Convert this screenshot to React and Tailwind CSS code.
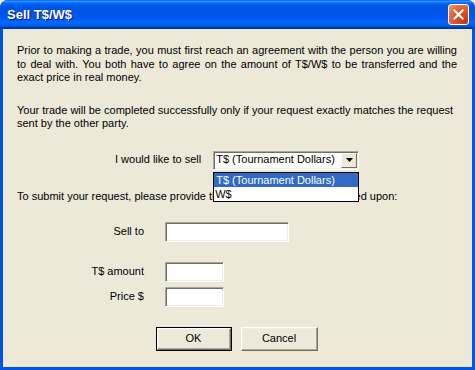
const font = { fontFamily: '"Liberation Sans", Arial, sans-serif' };

function Sunken({ className = '', children }) {
  return (
    <div
      className={`border border-t-[#aca899] border-l-[#aca899] border-r-white border-b-white bg-white shadow-[inset_1px_1px_0_#716f64,inset_-1px_-1px_0_#f1efe2] ${className}`}
    >
      {children}
    </div>
  );
}

function Button({ label, isDefault }) {
  const face = (
    <div className="flex h-full w-full items-center justify-center border border-t-white border-l-white border-r-[#716f64] border-b-[#716f64] bg-[#ece9d8] shadow-[inset_-1px_-1px_0_#aca899,inset_1px_1px_0_#f1efe2]">
      {label}
    </div>
  );
  return isDefault ? (
    <div className="h-[24px] w-[76px] border border-black">{face}</div>
  ) : (
    <div className="h-[24px] w-[77px]">{face}</div>
  );
}

function FieldRow({ label, width, className = '' }) {
  return (
    <div className={`flex items-center ${className}`}>
      <span className="w-[127px] text-right">{label}</span>
      <Sunken className={`ml-[21px] h-[20px] ${width}`} />
    </div>
  );
}

export default function App() {
  return (
    <div className="h-[370px] w-[475px] overflow-hidden bg-[#ece9d8]" style={font}>
      <div className="flex h-full w-full flex-col rounded-t-[8px] bg-[#0054e3]">
        <div className="flex h-[29px] items-center justify-between rounded-t-[8px] bg-[linear-gradient(180deg,#0058ee_0%,#3593ff_4%,#288eff_6%,#127dff_8%,#036ffc_10%,#0262ee_14%,#0057e5_20%,#0054e3_24%,#0055eb_56%,#005bf5_66%,#026afe_76%,#0062ef_86%,#0052d6_92%,#0040ab_94%,#003092_100%)] pl-[7px] pr-[6px]">
          <span className="text-[13px] font-bold text-white [text-shadow:1px_1px_0_#0f1089]">Sell T$/W$</span>
          <div className="flex h-[21px] w-[21px] items-center justify-center rounded-[3px] border border-white bg-[radial-gradient(circle_at_85%_85%,#c23a0c_0%,#e0562a_50%,#e8744a_75%,#f0a080_100%)]">
            <svg width="11" height="11" viewBox="0 0 11 11">
              <path d="M1.5 1.5 L9.5 9.5 M9.5 1.5 L1.5 9.5" stroke="white" strokeWidth="2.2" strokeLinecap="square" />
            </svg>
          </div>
        </div>
        <div className="mx-[3px] mb-[3px] flex-1 bg-[#ece9d8] pl-[14px] pr-[15px] pt-[15px] text-[11px] leading-[13.5px] text-black">
          <p className="text-justify">
            <span className="block [text-align-last:justify]">
              Prior to making a trade, you must first reach an agreement with the person you are willing
            </span>
            <span className="block [text-align-last:justify]">
              to deal with. You both have to agree on the amount of T$/W$ to be transferred and the
            </span>
            <span className="block">exact price in real money.</span>
          </p>
          <p className="mt-[19px]">
            Your trade will be completed successfully only if your request exactly matches the request
            <br />
            sent by the other party.
          </p>
          <div className="mt-[20px] flex items-center pl-[98px]">
            <span>I would like to sell</span>
            <div className="relative ml-[12px]">
              <Sunken className="flex h-[19px] w-[146px] items-center justify-between pl-[2px] pr-[1px]">
                <span className="whitespace-nowrap">T$ (Tournament Dollars)</span>
                <div className="flex h-[15px] w-[16px] items-center justify-center border border-t-white border-l-white border-r-[#716f64] border-b-[#716f64] bg-[#ece9d8]">
                  <svg width="7" height="4" viewBox="0 0 7 4">
                    <path d="M0 0 H7 L3.5 4 Z" fill="black" />
                  </svg>
                </div>
              </Sunken>
              <div className="absolute left-0 top-[21px] z-10 w-[146px] whitespace-nowrap border border-black bg-white leading-[14px]">
                <div className="bg-[#316ac5] px-[2px] text-white">T$ (Tournament Dollars)</div>
                <div className="px-[1px]">W$</div>
              </div>
            </div>
          </div>
          <p className="mt-[20px]">
            To submit your request, please provide the information you have agreed upon:
          </p>
          <FieldRow label="Sell to" width="w-[124px]" className="mt-[19px]" />
          <FieldRow label="T$ amount" width="w-[59px]" className="mt-[20px]" />
          <FieldRow label="Price $" width="w-[59px]" className="mt-[5px]" />
          <div className="mt-[20px] flex justify-center gap-[9px] pr-[1px]">
            <Button label="OK" isDefault />
            <Button label="Cancel" />
          </div>
        </div>
      </div>
    </div>
  );
}
